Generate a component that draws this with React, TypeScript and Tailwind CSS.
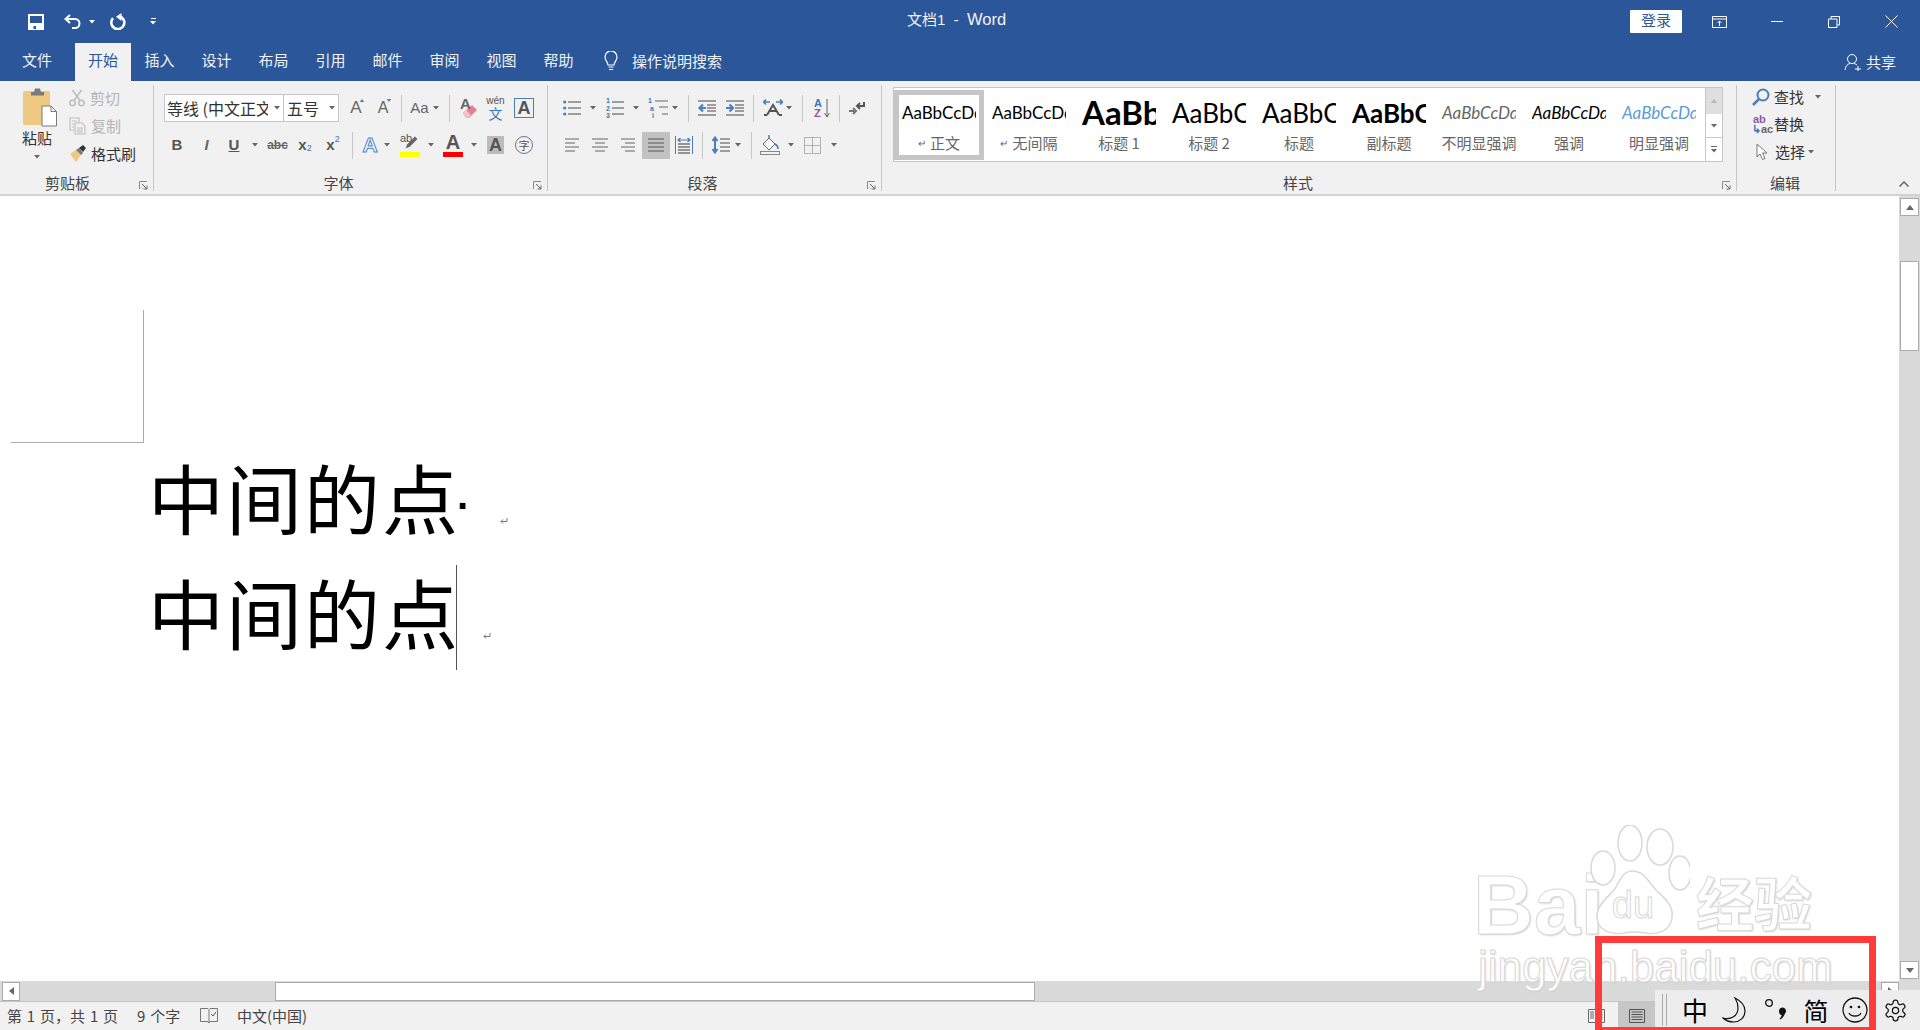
import React from "react";

const G = "#666666";
const B = "#4a7fb8";

function Caret({ className = "", color = "#666666" }: { className?: string; color?: string }) {
  return (
    <svg viewBox="0 0 6 4" className={`w-[6px] h-[4px] shrink-0 ${className}`}>
      <path d="M0 0h6L3 3.5z" fill={color} />
    </svg>
  );
}
function VSep({ className = "" }: { className?: string }) {
  return <div className={`w-px h-[27px] bg-[#c6c6c6] shrink-0 ${className}`} />;
}
function GroupSep() {
  return <div className="w-px h-[106px] mt-[4px] bg-[#c6c6c6] shrink-0" />;
}
function Launcher({ className = "" }: { className?: string }) {
  return (
    <svg viewBox="0 0 9 9" className={`w-[9px] h-[9px] absolute top-[100px] ${className}`}>
      <path d="M.5 8V.5H8" fill="none" stroke="#8a8a8a" />
      <path d="M3 3l5 5M8 4.5V8H4.5" fill="none" stroke="#666" />
    </svg>
  );
}
function GroupLabel({ children, className = "" }: { children: React.ReactNode; className?: string }) {
  return (
    <div className={`h-[20px] flex items-center justify-center text-[15px] leading-[20px] text-[#444] ${className}`}>
      {children}
    </div>
  );
}
function Lines({ ys, x1, x2, color = G, w = 1.2 }: { ys: number[]; x1: number; x2: number; color?: string; w?: number }) {
  return (
    <>
      {ys.map((y) => (
        <path key={y} d={`M${x1} ${y}H${x2}`} stroke={color} strokeWidth={w} fill="none" />
      ))}
    </>
  );
}

function PasteIcon() {
  return (
    <svg viewBox="0 0 34 39" className="w-[34px] h-[39px]">
      <rect x="0" y="3" width="27" height="34" rx="1.5" fill="#eec982" />
      <path d="M8 4h3l1-3.5h5L18 4h3v3.5H8z" fill="#7b7b7b" />
      <path d="M19 18h9l5.5 5.5V38H19z" fill="#fff" stroke="#7b7b7b" />
      <path d="M28 18v5.5h5.5" fill="none" stroke="#7b7b7b" />
    </svg>
  );
}
function ScissorsIcon() {
  return (
    <svg viewBox="0 0 16 18" className="w-[16px] h-[18px]">
      <g fill="none" stroke="#bdbdbd" strokeWidth="1.5">
        <circle cx="3.5" cy="14" r="2.7" />
        <circle cx="12.5" cy="14" r="2.7" />
        <path d="M5 11.5L12.5 1M11 11.5L3.5 1" />
      </g>
    </svg>
  );
}
function CopyIcon() {
  return (
    <svg viewBox="0 0 17 18" className="w-[17px] h-[18px]">
      <g fill="#f2f2f2" stroke="#bdbdbd" strokeWidth="1.1">
        <path d="M1 1h9v12H1z" />
        <path d="M6 6h7l3 3v8H6z" />
      </g>
      <path d="M3 4h5M3 7h2M3 10h2M8 11h6M8 13h6M8 15h6" stroke="#bdbdbd" />
    </svg>
  );
}
function BrushIcon() {
  return (
    <svg viewBox="0 0 17 18" className="w-[17px] h-[18px]">
      <path d="M1 9l6-4 5 5-5 7z" fill="#eec982" />
      <path d="M7 5l3-2 4 5-2 2z" fill="#777" />
      <path d="M10 3l4-3 3 3-3 4z" fill="#333" />
    </svg>
  );
}

function TextIcon({ children, className = "" }: { children: React.ReactNode; className?: string }) {
  return <div className={`flex items-center justify-center shrink-0 font-['Liberation_Sans',sans-serif] ${className}`}>{children}</div>;
}

function FontRow1() {
  return (
    <div className="flex items-center h-[28px] mt-[13px] pl-[10px]">
      <div className="w-[120px] h-[28px] bg-white border border-[#c6c6c6] flex items-center pl-[2px] text-[16px] text-[#333] overflow-hidden shrink-0">
        <span className="w-[101px] overflow-hidden whitespace-nowrap">等线 (中文正文)</span>
        <Caret className="ml-[6px]" />
      </div>
      <div className="w-[55px] h-[28px] bg-white border border-l-0 border-[#c6c6c6] flex items-center pl-[3px] text-[16px] text-[#333] shrink-0">
        <span className="w-[42px]">五号</span>
        <Caret />
      </div>
      <TextIcon className="ml-[9px] w-[16px] h-[20px] relative text-[17px] text-[#666]">
        A
        <svg viewBox="0 0 6 4" className="absolute right-[-1px] top-[1px] w-[6px] h-[3px]"><path d="M3 0l3 4H0z" fill={B} /></svg>
      </TextIcon>
      <TextIcon className="ml-[12px] w-[14px] h-[20px] relative text-[16px] text-[#666]">
        A
        <svg viewBox="0 0 6 4" className="absolute right-[-2px] top-[1px] w-[6px] h-[3px]"><path d="M3 4l3-4H0z" fill={B} /></svg>
      </TextIcon>
      <VSep className="ml-[11px]" />
      <TextIcon className="ml-[9px] w-[17px] text-[15px] text-[#666]">Aa</TextIcon>
      <Caret className="ml-[5px]" />
      <VSep className="ml-[10px]" />
      <div className="ml-[10px] w-[18px] h-[22px] relative shrink-0">
        <svg viewBox="0 0 18 22" className="w-[18px] h-[22px]">
          <path d="M3 16L12 8l5 5-8 8H6z" fill="#ea7f8e" />
          <path d="M3 16l3-3 5 5-3 3H6z" fill="#f6c3ca" />
        </svg>
        <span className="absolute left-0 top-[-4px] text-[15px] font-bold text-[#666] font-['Liberation_Sans',sans-serif]">A</span>
      </div>
      <div className="ml-[9px] w-[17px] h-[24px] flex flex-col items-center shrink-0 leading-none">
        <span className="text-[10px] leading-[10px] text-[#555] font-['Liberation_Sans',sans-serif]">wén</span>
        <span className="text-[14px] leading-[14px] text-[#3c78b5]">文</span>
      </div>
      <TextIcon className="ml-[10px] w-[20px] h-[20px] border border-[#4a7fb8] text-[18px] font-bold text-[#555] leading-none">A</TextIcon>
    </div>
  );
}

function FontRow2() {
  return (
    <div className="flex items-center h-[28px] mt-[9px]">
      <TextIcon className="ml-[18px] w-[10px] text-[15px] font-bold text-[#555]">B</TextIcon>
      <TextIcon className="ml-[20px] w-[9px] text-[15px] italic font-bold text-[#666]">I</TextIcon>
      <TextIcon className="ml-[18px] w-[10px] text-[15px] font-bold underline text-[#555]">U</TextIcon>
      <Caret className="ml-[13px]" />
      <TextIcon className="ml-[10px] w-[19px] text-[12px] font-bold line-through text-[#666]">abc</TextIcon>
      <TextIcon className="ml-[11px] w-[14px] text-[15px] font-bold text-[#555]">
        x<span className="text-[9px] text-[#3c78b5] font-normal translate-y-[4px]">2</span>
      </TextIcon>
      <TextIcon className="ml-[14px] w-[14px] text-[15px] font-bold text-[#555]">
        x<span className="text-[9px] text-[#3c78b5] font-normal translate-y-[-5px]">2</span>
      </TextIcon>
      <VSep className="ml-[12px]" />
      <TextIcon className="ml-[9px] w-[16px] text-[21px] font-bold text-white [-webkit-text-stroke:1px_#4a86c8]">A</TextIcon>
      <Caret className="ml-[6px]" />
      <div className="ml-[10px] w-[20px] h-[24px] flex flex-col shrink-0 relative">
        <span className="text-[11px] leading-[11px] text-[#555] font-['Liberation_Sans',sans-serif]">ab</span>
        <svg viewBox="0 0 20 20" className="absolute left-[3px] top-[1px] w-[17px] h-[17px]">
          <path d="M3 17l2-5L14 3l3 3-9 9z" fill="#666" />
        </svg>
        <div className="mt-auto h-[5px] w-[20px] bg-[#ffff00]" />
      </div>
      <Caret className="ml-[8px]" />
      <div className="ml-[9px] w-[20px] h-[24px] flex flex-col items-center shrink-0 font-['Liberation_Sans',sans-serif]">
        <span className="text-[20px] leading-[19px] font-bold text-[#555]">A</span>
        <div className="mt-auto h-[5px] w-[20px] bg-[#ff0000]" />
      </div>
      <Caret className="ml-[8px]" />
      <TextIcon className="ml-[10px] w-[17px] h-[18px] bg-[#bcbcbc] text-[18px] font-bold text-[#555]">A</TextIcon>
      <div className="ml-[11px] w-[18px] h-[18px] rounded-full border border-[#777] flex items-center justify-center text-[11px] text-[#555] shrink-0">字</div>
    </div>
  );
}

function ParaRow1() {
  return (
    <div className="flex items-center h-[28px] mt-[13px]">
      <svg viewBox="0 0 18 18" className="ml-[15px] w-[18px] h-[18px] shrink-0">
        <Lines ys={[3, 9, 15]} x1={5} x2={18} />
        {[3, 9, 15].map((y) => <circle key={y} cx="1.7" cy={y} r="1.6" fill={B} />)}
      </svg>
      <Caret className="ml-[9px]" />
      <div className="ml-[10px] w-[18px] h-[18px] relative shrink-0">
        <div className="absolute left-0 top-[-2px] text-[7px] leading-[7.5px] text-[#3c78b5] font-['Liberation_Sans',sans-serif] font-bold">1<br />2<br />3</div>
        <svg viewBox="0 0 18 18" className="w-[18px] h-[18px]"><Lines ys={[3, 9, 15]} x1={6} x2={18} /></svg>
      </div>
      <Caret className="ml-[9px]" />
      <div className="ml-[9px] w-[20px] h-[18px] relative shrink-0">
        <div className="absolute left-0 top-[-2px] text-[7px] leading-[7.5px] text-[#3c78b5] font-['Liberation_Sans',sans-serif] font-bold">1<br />&nbsp;a<br />&nbsp;&nbsp;i</div>
        <svg viewBox="0 0 20 18" className="w-[20px] h-[18px]">
          <path d="M7 2h13M11 8h9M14 15h6" stroke={G} strokeWidth="1.2" />
        </svg>
      </div>
      <Caret className="ml-[4px]" />
      <VSep className="ml-[10px]" />
      <svg viewBox="0 0 18 16" className="ml-[9px] w-[18px] h-[16px] shrink-0">
        <Lines ys={[1, 15]} x1={0} x2={18} /><Lines ys={[5, 8, 11]} x1={9} x2={18} />
        <path d="M8 8H2M5 4.5L1.5 8 5 11.5" stroke={B} strokeWidth="2.2" fill="none" />
      </svg>
      <svg viewBox="0 0 18 16" className="ml-[10px] w-[18px] h-[16px] shrink-0">
        <Lines ys={[1, 15]} x1={0} x2={18} /><Lines ys={[5, 8, 11]} x1={9} x2={18} />
        <path d="M0 8h6M3.5 4.5L7 8l-3.5 3.5" stroke={B} strokeWidth="2.2" fill="none" />
      </svg>
      <VSep className="ml-[9px]" />
      <div className="ml-[9px] w-[20px] h-[18px] relative shrink-0">
        <svg viewBox="0 0 20 18" className="w-[20px] h-[18px]">
          <path d="M0 3h7M3 .5L.5 3 3 5.5M20 3h-7M17 .5L19.5 3 17 5.5" stroke={B} strokeWidth="1.6" fill="none" />
          <path d="M1 16h3M16 16h3M4 16L10 6l6 10M6 12h8" stroke="#555" strokeWidth="2" fill="none" />
        </svg>
      </div>
      <Caret className="ml-[3px]" />
      <VSep className="ml-[10px]" />
      <div className="ml-[11px] w-[16px] h-[20px] relative shrink-0 font-['Liberation_Sans',sans-serif] font-bold text-[11px] leading-[10px]">
        <div className="text-[#3c78b5]">A</div>
        <div className="text-[#8a5aa8]">Z</div>
        <svg viewBox="0 0 6 20" className="absolute right-0 top-0 w-[6px] h-[20px]"><path d="M3 1v18M.5 15L3 19l2.5-4" stroke={G} fill="none" /></svg>
      </div>
      <VSep className="ml-[9px]" />
      <svg viewBox="0 0 16 14" className="ml-[9px] w-[16px] h-[14px] shrink-0">
        <path d="M15 1v4H9M11 2L8 5l3 3" stroke="#555" strokeWidth="2" fill="none" />
        <path d="M0 10h6M4 7l3 3-3 3" stroke="#777" strokeWidth="2" fill="none" />
      </svg>
    </div>
  );
}

function ParaRow2() {
  return (
    <div className="flex items-center h-[28px] mt-[9px]">
      <svg viewBox="0 0 14 14" className="ml-[17px] w-[14px] h-[14px] shrink-0">
        <path d="M0 1h14M0 5h10M0 9h14M0 13h10" stroke={G} strokeWidth="1.2" />
      </svg>
      <svg viewBox="0 0 16 14" className="ml-[13px] w-[16px] h-[14px] shrink-0">
        <path d="M0 1h16M3 5h10M0 9h16M3 13h10" stroke={G} strokeWidth="1.2" />
      </svg>
      <svg viewBox="0 0 14 14" className="ml-[13px] w-[14px] h-[14px] shrink-0">
        <path d="M0 1h14M4 5h10M0 9h14M4 13h10" stroke={G} strokeWidth="1.2" />
      </svg>
      <div className="ml-[7px] w-[28px] h-[27px] bg-[#c2c2c2] flex items-center justify-center shrink-0">
        <svg viewBox="0 0 16 14" className="w-[16px] h-[14px]">
          <path d="M0 1h16M0 5h16M0 9h16M0 13h16" stroke="#555" strokeWidth="1.2" />
        </svg>
      </div>
      <svg viewBox="0 0 18 18" className="ml-[5px] w-[18px] h-[18px] shrink-0">
        <path d="M.5 0v18M17.5 0v18" stroke={B} />
        <path d="M3 4h12M5.5 2L3 4l2.5 2M12.5 2L15 4l-2.5 2" stroke={B} strokeWidth="1.2" fill="none" />
        <Lines ys={[8, 11, 14, 17]} x1={3} x2={15} color="#555" />
      </svg>
      <VSep className="ml-[9px]" />
      <svg viewBox="0 0 18 18" className="ml-[9px] w-[18px] h-[18px] shrink-0">
        <path d="M3 3v12M.5 5L3 1.5 5.5 5M.5 13L3 16.5 5.5 13" stroke={B} strokeWidth="2" fill="none" />
        <Lines ys={[3, 7, 11, 15]} x1={8} x2={18} />
      </svg>
      <Caret className="ml-[5px]" />
      <VSep className="ml-[10px]" />
      <svg viewBox="0 0 20 20" className="ml-[8px] w-[20px] h-[20px] shrink-0">
        <path d="M3 9l6-6 6 6-6 6z" fill="#fff" stroke={G} />
        <path d="M9 3V0M15 9c2 1 3 3 3 5" stroke={B} strokeWidth="1.5" fill="none" />
        <rect x="0.5" y="16.5" width="19" height="3" fill="#f2f2f2" stroke="#888" />
      </svg>
      <Caret className="ml-[8px]" />
      <svg viewBox="0 0 17 17" className="ml-[10px] w-[17px] h-[17px] shrink-0">
        <path d="M.5.5h16v16H.5zM8.5.5v16M.5 8.5h16" stroke="#777" strokeDasharray="1 1" fill="none" />
      </svg>
      <Caret className="ml-[10px]" />
    </div>
  );
}

function StyleItem({ sample, label, mark, selected, sampleClass = "" }: {
  sample: string; label: string; mark?: boolean; selected?: boolean; sampleClass?: string;
}) {
  return (
    <div className={`w-[90px] h-[70px] shrink-0 flex flex-col items-center border-[5px] ${selected ? "border-[#c6c6c6]" : "border-transparent"}`}>
      <div className={`w-[74px] h-[37px] overflow-hidden whitespace-nowrap flex items-center font-['Lato',sans-serif] ${sampleClass}`}>{sample}</div>
      <div className="mt-[1px] h-[20px] flex items-center text-[15px] leading-[20px] text-[#666]">
        {mark && <span className="text-[10px] mr-[4px] text-[#666]">↵</span>}
        {label}
      </div>
    </div>
  );
}

function Gallery() {
  return (
    <div className="ml-[11px] mt-[6px] w-[830px] h-[75px] bg-white border border-[#c6c6c6] flex items-center relative">
      <div className="flex items-center w-[812px] overflow-hidden">
        <StyleItem selected mark sample="AaBbCcDd" label="正文" sampleClass="text-[17px] text-black" />
        <StyleItem mark sample="AaBbCcDd" label="无间隔" sampleClass="text-[17px] text-black" />
        <StyleItem sample="AaBbCcDd" label="标题 1" sampleClass="text-[33px] font-bold text-black" />
        <StyleItem sample="AaBbCcDd" label="标题 2" sampleClass="text-[26px] text-black" />
        <StyleItem sample="AaBbCcDd" label="标题" sampleClass="text-[26px] text-black" />
        <StyleItem sample="AaBbCcDd" label="副标题" sampleClass="text-[26px] font-bold text-black" />
        <StyleItem sample="AaBbCcDd" label="不明显强调" sampleClass="text-[17px] italic text-[#666]" />
        <StyleItem sample="AaBbCcDd" label="强调" sampleClass="text-[17px] italic text-black" />
        <StyleItem sample="AaBbCcDd" label="明显强调" sampleClass="text-[17px] italic text-[#5b9bd5]" />
      </div>
      <div className="ml-auto w-[17px] h-full flex flex-col border-l border-[#c6c6c6]">
        <div className="h-[26px] bg-[#dfdfdf] flex items-center justify-center">
          <svg viewBox="0 0 6 4" className="w-[6px] h-[4px]"><path d="M3 0l3 4H0z" fill="#b5b5b5" /></svg>
        </div>
        <div className="h-[24px] border-b border-[#c6c6c6] flex items-center justify-center">
          <Caret />
        </div>
        <div className="flex-1 flex flex-col items-center justify-center gap-[2px]">
          <div className="w-[6px] h-px bg-[#666]" />
          <Caret />
        </div>
      </div>
    </div>
  );
}

function Ribbon() {
  return (
    <div className="h-[115px] bg-[#f1f1f1] border-b-2 border-[#d2d2d2] flex shrink-0 relative">
      {/* clipboard */}
      <div className="w-[153px] shrink-0 relative">
        <div className="h-[92px] flex">
          <div className="w-[64px] flex flex-col items-center pl-[16px] pt-[7px] shrink-0">
            <PasteIcon />
            <span className="text-[15px] leading-[20px] mt-[1px] text-[#333] ml-[-6px]">粘贴</span>
            <Caret className="mt-[7px] ml-[-6px]" />
          </div>
          <div className="flex flex-col pl-[5px] pt-[8px] gap-[10px] text-[15px] leading-[18px]">
            <div className="flex items-center gap-[5px] text-[#b5b5b5]"><ScissorsIcon /><span>剪切</span></div>
            <div className="flex items-center gap-[5px] text-[#b5b5b5]"><CopyIcon /><span>复制</span></div>
            <div className="flex items-center gap-[5px] text-[#333] whitespace-nowrap"><BrushIcon /><span>格式刷</span></div>
          </div>
        </div>
        <GroupLabel className="pr-[18px]">剪贴板</GroupLabel>
        <Launcher className="left-[139px]" />
      </div>
      <GroupSep />
      {/* font */}
      <div className="w-[393px] shrink-0 relative">
        <div className="h-[92px] flex flex-col">
          <FontRow1 />
          <FontRow2 />
        </div>
        <GroupLabel className="pr-[24px]">字体</GroupLabel>
        <Launcher className="left-[379px]" />
      </div>
      <GroupSep />
      {/* paragraph */}
      <div className="w-[333px] shrink-0 relative">
        <div className="h-[92px] flex flex-col">
          <ParaRow1 />
          <ParaRow2 />
        </div>
        <GroupLabel className="pr-[24px]">段落</GroupLabel>
        <Launcher className="left-[319px]" />
      </div>
      <GroupSep />
      {/* styles */}
      <div className="w-[854px] shrink-0 relative">
        <div className="h-[92px] flex flex-col"><Gallery /></div>
        <GroupLabel className="pr-[22px]">样式</GroupLabel>
        <Launcher className="left-[840px]" />
      </div>
      <GroupSep />
      {/* editing */}
      <div className="w-[98px] shrink-0">
        <div className="h-[92px] flex flex-col pl-[15px] pt-[7px] text-[15px] text-[#333]">
          <div className="h-[18px] flex items-center">
            <svg viewBox="0 0 18 18" className="w-[18px] h-[18px] shrink-0">
              <circle cx="11" cy="7" r="5.5" fill="none" stroke={B} strokeWidth="2" />
              <path d="M7 11l-6 6" stroke={B} strokeWidth="2.5" />
            </svg>
            <span className="ml-[4px]">查找</span>
            <Caret className="ml-[11px]" />
          </div>
          <div className="h-[18px] mt-[9px] flex items-center">
            <div className="w-[19px] h-[20px] text-[11px] leading-[10px] font-['Liberation_Sans',sans-serif] font-bold shrink-0">
              <div className="text-[#8a5aa8] pl-[1px]">ab</div>
              <div className="text-[#3c78b5]">↳<span className="text-[#666]">ac</span></div>
            </div>
            <span className="ml-[3px]">替换</span>
          </div>
          <div className="h-[18px] mt-[10px] flex items-center">
            <svg viewBox="0 0 12 18" className="ml-[4px] w-[12px] h-[18px] shrink-0">
              <path d="M1 1v13l3-3 2.5 5.5 2.5-1L6.5 10H11z" fill="#fff" stroke="#777" />
            </svg>
            <span className="ml-[7px]">选择</span>
            <Caret className="ml-[3px]" />
          </div>
        </div>
        <GroupLabel className="pr-[2px]">编辑</GroupLabel>
      </div>
      <GroupSep />
      <div className="flex-1 flex items-end justify-end pb-[7px] pr-[11px]">
        <svg viewBox="0 0 10 6" className="w-[10px] h-[6px]">
          <path d="M.5 5.5L5 1l4.5 4.5" fill="none" stroke="#666" strokeWidth="1.5" />
        </svg>
      </div>
    </div>
  );
}

function ReturnMark({ className = "" }: { className?: string }) {
  return (
    <svg viewBox="0 0 8 7" className={`w-[8px] h-[7px] shrink-0 ${className}`}>
      <path d="M7 0v3.5H1M3 1.5L1 3.5l2 2" fill="none" stroke="#777" />
    </svg>
  );
}

const TABS = ["插入", "设计", "布局", "引用", "邮件", "审阅", "视图", "帮助"];

export default function App() {
  return (
    <div className="relative w-[1920px] h-[1030px] overflow-hidden flex flex-col bg-white font-['Noto_Sans_CJK_SC','Liberation_Sans',sans-serif]">
      {/* title bar */}
      <div className="h-[43px] bg-[#2b579a] flex items-center text-white shrink-0">
        <svg viewBox="0 0 16 16" className="ml-[28px] w-[16px] h-[16px] shrink-0">
          <path d="M0 0h16v16H0z" fill="#fff" />
          <path d="M2 2h12v7H2zM5.5 12H8v3H5.5z" fill="#2b579a" />
        </svg>
        <svg viewBox="0 0 18 16" className="ml-[20px] w-[18px] h-[16px] shrink-0">
          <path d="M6 1L1.5 5 6 9" fill="none" stroke="#fff" strokeWidth="2" />
          <path d="M2 5h9a4.5 4.5 0 0 1 0 9H8" fill="none" stroke="#fff" strokeWidth="2" />
        </svg>
        <Caret color="#fff" className="ml-[7px]" />
        <svg viewBox="0 0 17 17" className="ml-[15px] w-[17px] h-[17px] shrink-0">
          <path d="M9 3.2A6.5 6.5 0 1 1 3 5.2" fill="none" stroke="#fff" strokeWidth="2.6" />
          <path d="M11.5 0v8L6 3.800z" fill="#fff" />
        </svg>
        <div className="ml-[23px] flex flex-col items-center gap-[2px] shrink-0">
          <div className="w-[5px] h-px bg-white" />
          <Caret color="#fff" />
        </div>
        <div className="ml-[751px] mt-[-4px] text-[15px] whitespace-nowrap text-[#f2f2f2] font-['Liberation_Sans','Noto_Sans_CJK_SC',sans-serif]">文档1&nbsp;&nbsp;-&nbsp;&nbsp;<span className="text-[16.5px]">Word</span></div>
        <div className="ml-auto flex items-center pr-[22px]">
          <div className="w-[52px] h-[23px] bg-white rounded-[1px] flex items-center justify-center text-[15px] text-[#2b579a] pb-[2px]">登录</div>
          <svg viewBox="0 0 15 12" className="ml-[30px] w-[15px] h-[12px]">
            <path d="M.5.5h14v11H.5zM.5 3h14M7.5 10V5M5.5 7l2-2 2 2" fill="none" stroke="#fff" />
          </svg>
          <div className="ml-[44px] w-[12px] h-px bg-white" />
          <svg viewBox="0 0 12 12" className="ml-[45px] w-[12px] h-[12px]">
            <path d="M.5 3H9v8.500H.5zM3 3V.5h8.500V9H9" fill="none" stroke="#fff" />
          </svg>
          <svg viewBox="0 0 13 13" className="ml-[45px] w-[13px] h-[13px]">
            <path d="M.5.5l12 12M12.5.5l-12 12" stroke="#fff" fill="none" />
          </svg>
        </div>
      </div>
      {/* tabs */}
      <div className="h-[38px] bg-[#2b579a] flex items-stretch text-[15px] text-[#f2f2f2] shrink-0 pl-[7px]">
        <div className="w-[60px] flex items-center justify-center pb-[3px]">文件</div>
        <div className="ml-[8px] w-[56px] bg-[#f1f1f1] text-[#2b579a] flex items-center justify-center pb-[3px]">开始</div>
        {TABS.map((t) => (
          <div key={t} className="w-[57px] flex items-center justify-center pb-[3px]">{t}</div>
        ))}
        <div className="ml-[16px] flex items-center pb-[2px]">
          <svg viewBox="0 0 16 20" className="w-[16px] h-[20px]">
            <path d="M5 14c0-3-3-4-3-8a6 6 0 0 1 12 0c0 4-3 5-3 8z" fill="none" stroke="#fff" strokeWidth="1.2" />
            <path d="M5.5 16h5M6 18.5h4" stroke="#fff" strokeWidth="1.2" />
          </svg>
          <span className="ml-[13px]">操作说明搜索</span>
        </div>
        <div className="ml-auto flex items-center pr-[24px]">
          <svg viewBox="0 0 18 18" className="w-[18px] h-[18px]">
            <circle cx="8" cy="6" r="4.5" fill="none" stroke="#fff" />
            <path d="M1 17c.5-4 2.5-6 5-6.5M10 10.5c1 .2 2 .7 3 1.500M11 16h6M14 13v6" fill="none" stroke="#fff" />
          </svg>
          <span className="ml-[4px]">共享</span>
        </div>
      </div>
      <Ribbon />
      {/* document + vertical scrollbar */}
      <div className="flex-1 flex min-h-0">
        <div className="flex-1 bg-white">
          <div className="ml-[11px] mt-[114px] w-[133px] h-[133px] border-r border-b border-[#ababab]" />
          <div className="ml-[148px] h-[115px] flex items-center text-[76px] leading-[115px] text-black whitespace-nowrap">
            <span className="w-[312px] shrink-0 mt-[-8px] tracking-[2px]">中间的点</span>
            <span className="font-['Liberation_Sans',sans-serif] font-bold text-[40px] leading-[115px] ml-[-3px] mt-[12px]">·</span>
            <ReturnMark className="ml-[30px] mt-[41px]" />
          </div>
          <div className="ml-[148px] h-[115px] flex items-center text-[76px] leading-[115px] text-black whitespace-nowrap">
            <span className="w-[312px] shrink-0 mt-[-8px] tracking-[2px]">中间的点</span>
            <div className="ml-[-4px] mt-[4px] w-px h-[105px] bg-[#555] shrink-0" />
            <ReturnMark className="ml-[26px] mt-[41px]" />
          </div>
        </div>
        <div className="w-[21px] bg-[#dadada] flex flex-col items-center pt-[2px] shrink-0">
          <div className="w-[19px] h-[18px] bg-white border border-[#ababab] flex items-center justify-center">
            <svg viewBox="0 0 8 5" className="w-[8px] h-[5px]"><path d="M4 0l4 5H0z" fill="#666" /></svg>
          </div>
          <div className="mt-[45px] w-[19px] h-[90px] bg-white border border-[#ababab]" />
          <div className="mt-auto mb-[2px] w-[19px] h-[18px] bg-white border border-[#ababab] flex items-center justify-center">
            <svg viewBox="0 0 8 5" className="w-[8px] h-[5px]"><path d="M4 5l4-5H0z" fill="#666" /></svg>
          </div>
        </div>
      </div>
      {/* horizontal scrollbar */}
      <div className="h-[21px] bg-[#dadada] flex items-center pl-[2px] pr-[21px] shrink-0 border-b border-[#c6c6c6]">
        <div className="w-[18px] h-[19px] bg-white border border-[#ababab] flex items-center justify-center">
          <svg viewBox="0 0 5 8" className="w-[5px] h-[8px]"><path d="M0 4l5-4v8z" fill="#666" /></svg>
        </div>
        <div className="ml-[255px] w-[760px] h-[19px] bg-white border border-[#ababab]" />
        <div className="ml-auto w-[18px] h-[19px] bg-white border border-[#ababab] flex items-center justify-center">
          <svg viewBox="0 0 5 8" className="w-[5px] h-[8px]"><path d="M5 4L0 0v8z" fill="#666" /></svg>
        </div>
      </div>
      {/* status bar */}
      <div className="h-[28px] bg-[#f1f1f1] flex items-center text-[15px] text-[#444] pl-[7px] shrink-0 whitespace-nowrap [word-spacing:1.5px]">
        <span className="w-[130px]">第 1 页，共 1 页</span>
        <span className="w-[63px]">9 个字</span>
        <svg viewBox="0 0 18 16" className="w-[18px] h-[16px]">
          <path d="M8 13.5H.5V.5H8l1 1 1-1h7.500V13.500H10M9 2v13M7 13l2 2 2-2" fill="none" stroke="#777" />
          <path d="M11 6l2 2 3-4" fill="none" stroke="#555" />
        </svg>
        <span className="ml-[19px]">中文(中国)</span>
        <svg viewBox="0 0 17 14" className="ml-auto mr-[13px] w-[17px] h-[14px]">
          <path d="M.5.5H8v13H.5zM9 .5h7.500v13H9zM2 3h4M2 5h4M2 7h4M2 9h4M10.5 3h4M10.5 5h4M10.5 7h4M10.5 9h4" fill="none" stroke="#666" />
        </svg>
        <div className="w-[37px] h-[28px] bg-[#c6c6c6] flex items-center justify-center mr-[265px]">
          <svg viewBox="0 0 16 14" className="w-[16px] h-[14px]">
            <path d="M.5.5h15v13H.5zM2.5 3h11M2.5 5.5h11M2.5 8h11M2.5 10.5h11" fill="none" stroke="#555" />
          </svg>
        </div>
      </div>

      {/* Baidu watermark */}
      <div className="absolute left-[1473px] top-[863px] text-[84px] leading-[84px] font-bold text-white font-['Liberation_Sans',sans-serif] [-webkit-text-stroke:1px_#d8d8d8] [text-shadow:1px_1px_2px_#d0d0d0] pointer-events-none">Bai</div>
      <div className="absolute left-[1696px] top-[866px] text-[58px] leading-[70px] font-bold text-white whitespace-nowrap [-webkit-text-stroke:1px_#d8d8d8] [text-shadow:1px_1px_2px_#d0d0d0] pointer-events-none">经验</div>
      <div className="absolute left-[1478px] top-[939px] text-[44px] leading-[56px] text-white whitespace-nowrap font-['Liberation_Sans',sans-serif] [-webkit-text-stroke:1px_#d8d8d8] [text-shadow:1px_1px_2px_#d0d0d0] pointer-events-none">jingyan.baidu.com</div>
      <svg viewBox="0 0 100 115" className="absolute left-[1590px] top-[825px] w-[100px] h-[115px] pointer-events-none">
        <g fill="#fff" stroke="#d8d8d8" strokeWidth="1.5">
          <ellipse cx="13" cy="43" rx="12" ry="17" />
          <ellipse cx="40" cy="18" rx="12" ry="18" />
          <ellipse cx="70" cy="22" rx="13" ry="18" />
          <ellipse cx="90" cy="48" rx="11" ry="17" />
          <path d="M42 46c12 0 16 10 24 19 8 8 18 15 16 28-2 13-14 17-26 15-8-1-14-2-22 0-12 2-26-2-27-15-1-12 10-20 17-28 6-8 8-19 18-19z" />
        </g>
        <text x="43" y="93" textAnchor="middle" fontSize="38" fontFamily="Liberation Sans" fill="#fff" stroke="#d8d8d8">du</text>
      </svg>

      {/* IME toolbar */}
      <div className="absolute left-[1655px] top-[990px] w-[265px] h-[40px] bg-[#ededed] flex items-center text-black">
        <div className="ml-[7px] w-[5px] h-[32px] border-x border-[#aaa] shrink-0" />
        <span className="ml-[14px] w-[28px] text-center text-[26px] leading-none">中</span>
        <svg viewBox="0 0 24 26" className="ml-[13px] w-[24px] h-[26px] shrink-0">
          <path d="M13 1c6 3 10 8 10 13 0 7-6 11-11 11-5 0-9-2-11-4 8 2 15-2 15-10 0-4-1-7-3-10z" fill="none" stroke="#111" strokeWidth="1.2" />
        </svg>
        <svg viewBox="0 0 24 28" className="ml-[18px] w-[24px] h-[28px] shrink-0">
          <circle cx="5" cy="7" r="3.3" fill="none" stroke="#111" strokeWidth="1.3" />
          <path d="M15 15a3.500 3.500 0 1 1 6 2.500c-.8 2.500-2.500 4.500-4.500 6l-1-.8c1.200-1 2-2.200 2.300-3.700-1.800.2-2.800-2-2.800-4z" fill="#111" />
        </svg>
        <span className="ml-[15px] w-[26px] text-center text-[25px] leading-none">简</span>
        <svg viewBox="0 0 26 26" className="ml-[13px] w-[26px] h-[26px] shrink-0">
          <circle cx="13" cy="13" r="12" fill="none" stroke="#111" strokeWidth="1.3" />
          <circle cx="9" cy="10" r="1.3" fill="#111" />
          <circle cx="17" cy="10" r="1.3" fill="#111" />
          <path d="M7 16c2 4 10 4 12 0" fill="none" stroke="#111" strokeWidth="1.3" />
        </svg>
        <svg viewBox="0 0 24 24" className="ml-[15px] w-[25px] h-[25px] shrink-0" fill="none" stroke="#111" strokeWidth="1.2">
          <path d="M12.22 2h-.44a2 2 0 0 0-2 2v.18a2 2 0 0 1-1 1.73l-.43.25a2 2 0 0 1-2 0l-.15-.08a2 2 0 0 0-2.73.73l-.22.38a2 2 0 0 0 .73 2.73l.15.1a2 2 0 0 1 1 1.72v.51a2 2 0 0 1-1 1.74l-.15.09a2 2 0 0 0-.73 2.73l.22.38a2 2 0 0 0 2.73.73l.15-.08a2 2 0 0 1 2 0l.43.25a2 2 0 0 1 1 1.73V20a2 2 0 0 0 2 2h.44a2 2 0 0 0 2-2v-.18a2 2 0 0 1 1-1.73l.43-.25a2 2 0 0 1 2 0l.15.08a2 2 0 0 0 2.73-.73l.22-.39a2 2 0 0 0-.73-2.73l-.15-.08a2 2 0 0 1-1-1.74v-.5a2 2 0 0 1 1-1.74l.15-.09a2 2 0 0 0 .73-2.73l-.22-.38a2 2 0 0 0-2.73-.73l-.15.08a2 2 0 0 1-2 0l-.43-.25a2 2 0 0 1-1-1.73V4a2 2 0 0 0-2-2z" />
          <circle cx="12" cy="12" r="3" />
        </svg>
      </div>
      {/* red annotation box */}
      <div className="absolute left-[1595px] top-[936px] w-[281px] h-[98px] border-[7px] border-[#ff3b3b] pointer-events-none" />
    </div>
  );
}
